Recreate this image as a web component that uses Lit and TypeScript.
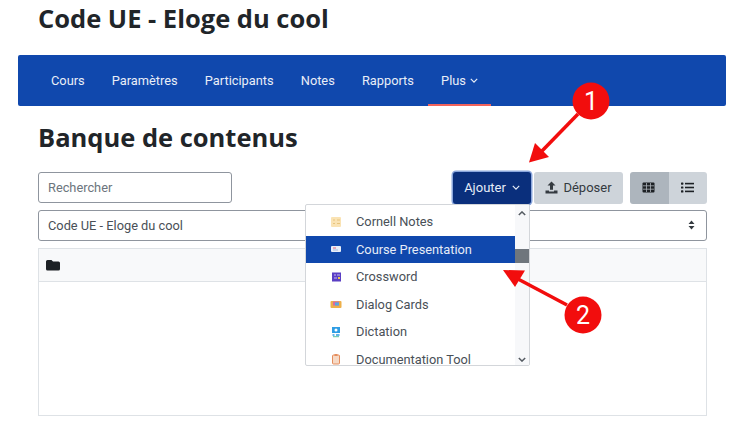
import { LitElement, html, css, svg } from "lit";
import { customElement } from "lit/decorators.js";

const chev = html`<svg class="chev" viewBox="0 0 10 6" width="8" height="5"><path d="M1 1l4 4 4-4" fill="none" stroke="currentColor" stroke-width="1.5"/></svg>`;

const icons: Record<string, unknown> = {
  cornell: svg`<rect x="1" y="1" width="10" height="10" rx="1" fill="#fae3b4"/><path d="M3 4h2M3 7.5h2M7 4h3M7 7.5h3" stroke="#e8c47c" stroke-width="1"/>`,
  course: svg`<rect x="1" y="3" width="10" height="6" rx="1" fill="#e8eef8"/><path d="M3 5h3" stroke="#e8607a" stroke-width="1"/><path d="M3 7h5" stroke="#a9bde0" stroke-width="1"/>`,
  cross: svg`<rect x="2" y="1.5" width="9" height="9" fill="#5a3fc4"/><path d="M4 4h2M7 4h3M4 7h3" stroke="#c9bdf2" stroke-width="1"/><rect x="8" y="6" width="2" height="2" fill="#f0c94a"/>`,
  dialog: svg`<rect x="0.5" y="3" width="11" height="7" rx="1" fill="#eeb04a"/><rect x="3" y="3.5" width="6" height="4" fill="#d96aa0"/><rect x="5" y="4.5" width="4" height="3" fill="#5aa8e0"/>`,
  dict: svg`<rect x="2" y="1" width="8" height="6" fill="#2f9de4"/><circle cx="6" cy="4" r="1.5" fill="#fff"/><path d="M2.5 9h2M6 9h3.5" stroke="#2f9de4" stroke-width="1.6"/><path d="M3 10.7h6" stroke="#5cc0a0" stroke-width="1"/>`,
  doc: svg`<rect x="2.5" y="2" width="7" height="9" rx="1" fill="#f6d9c5" stroke="#e58d5c" stroke-width="1"/><rect x="4.5" y="1" width="3" height="2" fill="#e58d5c"/>`,
};

const items: [string, string][] = [
  ["Cornell Notes", "cornell"],
  ["Course Presentation", "course"],
  ["Crossword", "cross"],
  ["Dialog Cards", "dialog"],
  ["Dictation", "dict"],
  ["Documentation Tool", "doc"],
];

@customElement("app-root")
export class AppRoot extends LitElement {
  static styles = css`
    :host {
      display: block;
      position: relative;
      width: 750px;
      height: 435px;
      overflow: hidden;
      background: #fff;
      font-family: Roboto, "Liberation Sans", sans-serif;
      color: #343a40;
      padding: 0 24px 0 18px;
      box-sizing: border-box;
    }
    h1, h2 {
      margin: 0;
      font-family: "Open Sans", sans-serif;
      font-weight: 700;
      color: #212529;
      font-size: 25.5px;
      line-height: 32px;
    }
    h1 { height: 55px; padding: 2px 0 0 20px; box-sizing: border-box; }
    h2 { margin-top: 15px; }
    nav {
      display: flex;
      gap: 27.2px;
      height: 51px;
      box-sizing: border-box;
      padding-left: 33px;
      background: #1048ad;
      border-radius: 2px;
      color: #e9eef7;
      font-size: 12.8px;
    }
    nav a {
      display: flex;
      align-items: center;
      gap: 4px;
      padding-bottom: 1px;
      box-sizing: border-box;
      height: 51px;
    }
    nav a.active { padding: 0 13px 1px; margin: 0 -13px; box-shadow: inset 0 -2px 0 #f1635c; }
    .chev { display: block; }
    .content { padding: 0 19px 0 20px; }
    .toolbar { display: flex; align-items: center; margin-top: 18px; height: 33px; }
    .search {
      width: 194px; height: 31px; box-sizing: border-box;
      border: 1px solid #8f959e; border-radius: 3px;
      padding-left: 9px; display: flex; align-items: center;
      font-size: 12.8px; color: #6c757d;
    }
    .spacer { flex: 1; }
    .btn {
      display: flex; align-items: center; justify-content: center;
      height: 32px; box-sizing: border-box; border-radius: 3px;
      font-size: 13px;
    }
    .add {
      width: 78px; height: 32px; background: #0a2f7c; color: #e6ecf7; gap: 6px;
      box-shadow: 0 0 0 1.5px #8aa6dc; margin-right: 3px;
    }
    .drop { width: 89px; background: #ced4da; color: #343a40; gap: 5px; margin-right: 7px; }
    .view { width: 38.5px; background: #ced4da; color: #1d2125; border-radius: 0 3px 3px 0; }
    .view.on { background: #adb5bd; border-radius: 3px 0 0 3px; padding-right: 2px; }
    .select {
      margin-top: 6px; height: 30.5px; box-sizing: border-box;
      border: 1px solid #8f959e; border-radius: 3px;
      display: flex; align-items: center; justify-content: space-between;
      padding: 0 11px 0 9px; font-size: 12.8px; color: #495057;
    }
    .table {
      margin-top: 7.5px; height: 168px; box-sizing: border-box;
      border: 1px solid #dee2e6;
    }
    .thead {
      height: 33px; box-sizing: border-box; background: #f8f9fa;
      border-bottom: 1px solid #dee2e6;
      display: flex; align-items: center; padding: 0 0 0 7px;
    }
    .menu {
      position: absolute; left: 305px; top: 204px; width: 225px; height: 162px;
      box-sizing: border-box; background: #fff;
      border: 1px solid #d3d6da; border-radius: 2px;
      overflow: hidden; display: flex; font-size: 12.8px; color: #495057;
    }
    .list { width: 209px; padding-top: 3px; }
    .row {
      height: 27.5px; display: flex; align-items: center;
      padding-left: 24px; gap: 14px; box-sizing: border-box;
    }
    .row.sel { background: #1048ad; color: #e6ecf7; }
    .row svg { flex: none; }
    .bar { width: 14px; background: #f7f8fa; display: flex; flex-direction: column; align-items: center; justify-content: space-between; position: relative; padding: 6px 0 3px; box-sizing: border-box; color: #555b62; }
    .thumb { position: absolute; left: 0; top: 44px; width: 14px; height: 14px; background: #6f767d; }
    .anno { position: absolute; left: 0; top: 0; pointer-events: none; }
    .anno text { font-family: Roboto, sans-serif; font-size: 25px; font-weight: 400; fill: #fff; text-anchor: middle; }
  `;

  render() {
    return html`
      <h1>Code UE - Eloge du cool</h1>
      <nav>
        <a>Cours</a><a>Paramètres</a><a>Participants</a><a>Notes</a><a>Rapports</a>
        <a class="active">Plus ${chev}</a>
      </nav>
      <div class="content">
        <h2>Banque de contenus</h2>
        <div class="toolbar">
          <div class="search">Rechercher</div>
          <div class="spacer"></div>
          <div class="btn add">Ajouter ${chev}</div>
          <div class="btn drop">
            <svg width="13" height="13" viewBox="0 0 13 13" fill="#343a40"><path d="M6.5 0.5L10.5 4.5H8v4.2H5V4.5H2.5z"/><path d="M0.5 9.5h3.5v1h5v-1h3.5v3H.5z"/></svg>
            Déposer
          </div>
          <div class="btn view on">
            <svg width="13" height="11" viewBox="0 0 13 11"><rect x="0.5" y="0.5" width="12" height="10" rx="1" fill="#1d2125"/><path d="M4.5 1v9M8.5 1v9M1 3.8h11M1 7.2h11" stroke="#adb5bd" stroke-width=".8"/></svg>
          </div>
          <div class="btn view">
            <svg width="13" height="11" viewBox="0 0 13 11" fill="#1d2125"><rect y="0.5" width="2.4" height="2.2" rx=".6"/><rect y="4.4" width="2.4" height="2.2" rx=".6"/><rect y="8.3" width="2.4" height="2.2" rx=".6"/><rect x="4" y="0.8" width="9" height="1.6"/><rect x="4" y="4.7" width="9" height="1.6"/><rect x="4" y="8.6" width="9" height="1.6"/></svg>
          </div>
        </div>
        <div class="select">
          <span>Code UE - Eloge du cool</span>
          <svg width="7" height="10" viewBox="0 0 7 10" fill="#343a40"><path d="M3.5 0.5L6.5 4H.5zM3.5 9.5L.5 6h6z"/></svg>
        </div>
        <div class="table">
          <div class="thead">
            <svg width="14" height="12" viewBox="0 0 14 12" fill="#1d2125"><path d="M1.5 1h4l1.5 1.5h5.5A1.5 1.5 0 0 1 14 4v6a1.5 1.5 0 0 1-1.5 1.5h-11A1.5 1.5 0 0 1 0 10V2.5A1.5 1.5 0 0 1 1.5 1z"/></svg>
          </div>
        </div>
      </div>
      <div class="menu">
        <div class="list">
          ${items.map(([n, k]) => html`
            <div class="row ${k === "course" ? "sel" : ""}">
              <svg width="12" height="12" viewBox="0 0 12 12">${icons[k]}</svg>
              <span>${n}</span>
            </div>`)}
        </div>
        <div class="bar">
          <svg width="8" height="5" viewBox="0 0 10 6"><path d="M1 5l4-4 4 4" fill="none" stroke="currentColor" stroke-width="1.8"/></svg>
          <div class="thumb"></div>
          <svg width="8" height="5" viewBox="0 0 10 6"><path d="M1 1l4 4 4-4" fill="none" stroke="currentColor" stroke-width="1.8"/></svg>
        </div>
      </div>
      <svg class="anno" width="750" height="435" viewBox="0 0 750 435">
        <path d="M578 114L541 152" stroke="#f20d0d" stroke-width="3.5" fill="none"/>
        <path d="M529 162.5L535 143L549 157z" fill="#f20d0d"/>
        <circle cx="591" cy="101" r="18.5" fill="#f20d0d"/>
        <text x="591" y="110">1</text>
        <path d="M567 305L518 279" stroke="#f20d0d" stroke-width="3.5" fill="none"/>
        <path d="M503 270L525 270.5L515 287z" fill="#f20d0d"/>
        <circle cx="583" cy="315" r="18.5" fill="#f20d0d"/>
        <text x="583" y="324">2</text>
      </svg>
    `;
  }
}
